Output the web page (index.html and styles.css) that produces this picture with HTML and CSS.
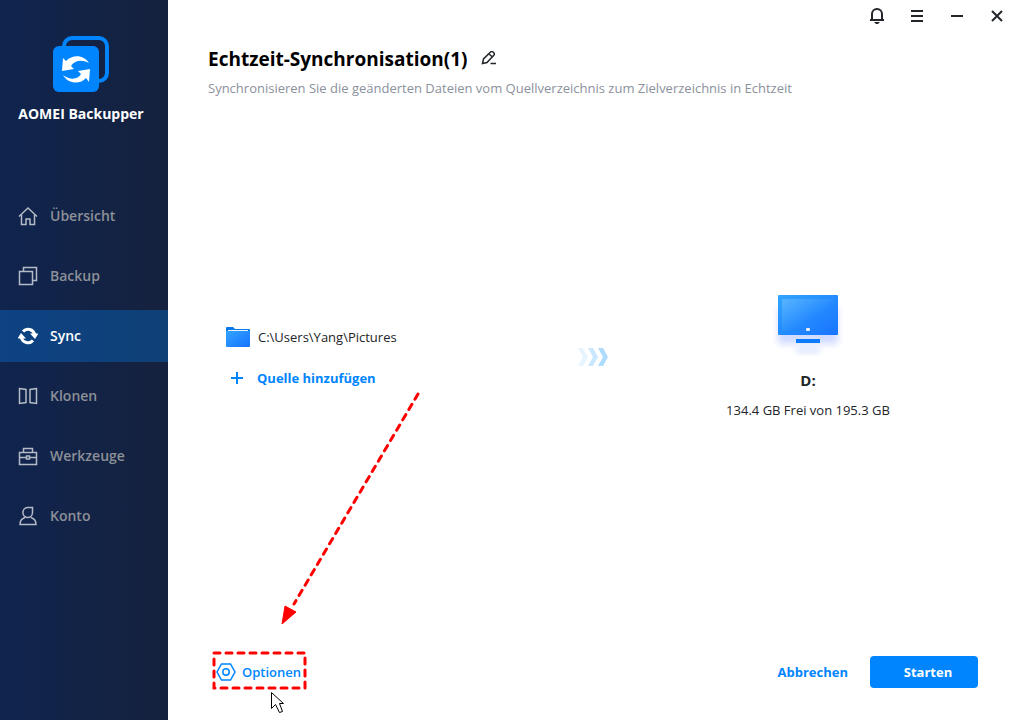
FILE: index.html
```html
<!DOCTYPE html>
<html lang="de">
<head>
  <meta charset="UTF-8">
  <title>AOMEI Backupper</title>
  <meta name="viewport" content="width=device-width, initial-scale=1">
  <link rel="stylesheet" href="styles.css">
</head>
<body>
  <div class="app">
    <aside class="sidebar">
      <div class="brand">
        <svg class="brand-logo" width="56" height="56" viewBox="0 0 56 56" aria-hidden="true">
          <rect x="11" y="2" width="43" height="43" rx="8" fill="none" stroke="#0085ff" stroke-width="4"/>
          <rect x="0" y="10" width="46" height="46" rx="6" fill="#0085ff"/>
          <path d="M10 22 9 35 21 33 18 30C21 25 28 23 36 27 31 19 20 18 13 25Z" fill="#fff"/>
          <path d="M36 46 37 33 25 35 28 38C25 43 18 45 10 39 15 48 27 49 33 42Z" fill="#fff"/>
        </svg>
        <span class="brand-name">AOMEI Backupper</span>
      </div>
      <nav class="menu">
        <a class="menu-item" href="#home">
          <svg width="20" height="20" viewBox="0 0 20 20"><path d="M1 10.500 10 2l9 8.500M3.500 9v9.500h4.500v-5.500h4v5.500h4.500V9"/></svg>
          Übersicht
        </a>
        <a class="menu-item" href="#backup">
          <svg width="20" height="20" viewBox="0 0 20 20"><path d="M1.500 5.500h13v13h-13zM5.500 5V1.500h13v13H15"/></svg>
          Backup
        </a>
        <a class="menu-item active" href="#sync" aria-current="page">
          <svg width="20" height="20" viewBox="0 0 20 20"><path class="bold" d="M5 5.500a6.800 6.800 0 0 1 11.700 3M15 14.500a6.800 6.800 0 0 1-11.700-3"/><path class="solid" d="M-.5 12.500 3 7l5 5.500zM20.500 7.500l-3.500 5.500L12 7.500z"/></svg>
          Sync
        </a>
        <a class="menu-item" href="#clone">
          <svg width="20" height="20" viewBox="0 0 20 20"><path d="M1.500 2.500 8 3.500v13l-6.500 1zM18.500 2.500 12 3.500v13l6.500 1z"/></svg>
          Klonen
        </a>
        <a class="menu-item" href="#tools">
          <svg width="20" height="20" viewBox="0 0 20 20"><path d="M1.500 6.500h17v12h-17zM5.500 6V2.500h9V6M1.500 11.500h7M11.500 11.500h7M8.500 10h3v3h-3z"/></svg>
          Werkzeuge
        </a>
        <a class="menu-item" href="#account">
          <svg width="20" height="20" viewBox="0 0 20 20"><path d="M14.500 1.500H10A4.800 5 0 1 0 14.500 7zM7 11.500c-3 1-5 3.500-5 7h16c0-3.500-2-6-5-7"/></svg>
          Konto
        </a>
      </nav>
    </aside>

    <main class="main">
      <div class="window-bar">
        <button class="window-btn" type="button" aria-label="Benachrichtigungen">
          <svg width="16" height="16" viewBox="0 0 16 16"><path d="M3 11.500V6a5 5 0 0 1 10 0v5.500M1 12h14"/><path class="clapper" d="M5 14h6l-2 2H7z"/></svg>
        </button>
        <button class="window-btn" type="button" aria-label="Menü">
          <svg width="16" height="16" viewBox="0 0 16 16"><path d="M2 3h12M2 8h12M2 13h12"/></svg>
        </button>
        <button class="window-btn" type="button" aria-label="Minimieren">
          <svg width="16" height="16" viewBox="0 0 16 16"><path d="M2 8h12"/></svg>
        </button>
        <button class="window-btn" type="button" aria-label="Schließen">
          <svg width="16" height="16" viewBox="0 0 16 16"><path d="M3 3l10 10M13 3 3 13"/></svg>
        </button>
      </div>

      <header class="task-header">
        <div class="task-title">
          <h1>Echtzeit-Synchronisation(1)</h1>
          <button class="edit-btn" type="button" aria-label="Name bearbeiten">
            <svg width="16" height="16" viewBox="0 0 16 16"><path d="M1.500 12.500 2.500 8 9.500 1q1.200-1 2.500 0l.8.800q1 1.200 0 2.500L6 11.500zM8 3l3.500 3M9.500 12.500H15"/></svg>
          </button>
        </div>
        <p>Synchronisieren Sie die geänderten Dateien vom Quellverzeichnis zum Zielverzeichnis in Echtzeit</p>
      </header>

      <section class="flow">
        <div class="source">
          <div class="source-row">
            <svg width="24" height="20" viewBox="0 0 24 20" aria-hidden="true">
              <defs>
                <linearGradient id="folder" x1="0" y1="0" x2="1" y2="1">
                  <stop offset="0" stop-color="#34a5ff"/>
                  <stop offset="1" stop-color="#1672ff"/>
                </linearGradient>
              </defs>
              <path d="M1 0h6l2 2h14q1 0 1 1v10H0V1q0-1 1-1z" fill="#0878e6"/>
              <path d="M2 3h20v3H2z" fill="#e8f4ff"/>
              <path d="M0 4h24v15q0 1-1 1H1q-1 0-1-1z" fill="url(#folder)"/>
            </svg>
            <span>C:\Users\Yang\Pictures</span>
          </div>
          <button class="add-btn" type="button">
            <svg width="12" height="12" viewBox="0 0 12 12" aria-hidden="true"><path d="M6 0v12M0 6h12" stroke="#0085ff" stroke-width="2"/></svg>
            Quelle hinzufügen
          </button>
        </div>

        <svg class="flow-arrow" width="30" height="18" viewBox="0 0 30 18" aria-hidden="true">
          <path d="M0 0h5l5 9-5 9H0l5-9z" fill="#e5f4ff"/>
          <path d="M10 0h5l5 9-5 9h-5l5-9z" fill="#c9e8ff"/>
          <path d="M20 0h5l5 9-5 9h-5l5-9z" fill="#addcff"/>
        </svg>

        <div class="target">
          <svg width="80" height="66" viewBox="0 0 80 66" aria-hidden="true">
            <defs>
              <linearGradient id="screen" x1="0" y1="0" x2="1" y2="1">
                <stop offset="0" stop-color="#30a5ff"/>
                <stop offset="1" stop-color="#1873ff"/>
              </linearGradient>
              <linearGradient id="glare" x1="0" y1="0" x2="1" y2="1">
                <stop offset="0" stop-color="#fff" stop-opacity=".2"/>
                <stop offset=".6" stop-color="#fff" stop-opacity="0"/>
              </linearGradient>
              <filter id="soft" x="-30%" y="-30%" width="160%" height="180%">
                <feGaussianBlur stdDeviation="3"/>
              </filter>
            </defs>
            <rect x="10" y="14" width="60" height="36" fill="#d0dcff" filter="url(#soft)"/>
            <rect x="28" y="53" width="24" height="6" fill="#dce5ff" filter="url(#soft)"/>
            <rect x="10" y="1" width="60" height="40" rx="1" fill="url(#screen)"/>
            <rect x="14" y="5" width="52" height="32" fill="url(#glare)"/>
            <rect x="38" y="34" width="4" height="3" rx="1" fill="#e8f2ff"/>
            <rect x="28" y="45" width="24" height="4" fill="#0b7cff"/>
          </svg>
          <h2>D:</h2>
          <p>134.4 GB Frei von 195.3 GB</p>
        </div>
      </section>

      <footer class="actions">
        <div class="options">
          <button class="options-btn" type="button">
            <svg width="20" height="18" viewBox="0 0 20 18" aria-hidden="true"><path d="M5.500 1h9L19 9l-4.500 8h-9L1 9z"/><circle cx="10" cy="9" r="3.200"/></svg>
            Optionen
          </button>
          <svg class="pointer-hint" width="216" height="328" viewBox="0 0 216 328" aria-hidden="true">
            <path d="M210 2 86 212" fill="none" stroke="#f00" stroke-width="3" stroke-linecap="round" stroke-dasharray="6 6"/>
            <path d="M74 232 77 214 88 220z" fill="#f00" stroke="#f00"/>
            <rect x="6" y="261" width="91" height="35" fill="none" stroke="#f00" stroke-width="3" stroke-linecap="round" stroke-dasharray="6 6"/>
            <path d="M63.500 300.500v16l4-4 4 8 3-1-3-8h4z" fill="#fff" stroke="#000"/>
          </svg>
        </div>
        <button class="cancel-btn" type="button">Abbrechen</button>
        <button class="start-btn" type="button">Starten</button>
      </footer>
    </main>
  </div>
</body>
</html>
```
FILE: styles.css
```css
* { box-sizing: border-box; }
body {
  margin: 0;
  font-family: "Open Sans", "Noto Sans", sans-serif;
  font-size: 13px;
  line-height: 20px;
  color: #222529;
  background: #fff;
}
h1, h2, p { margin: 0; }
button {
  padding: 0;
  border: none;
  background: none;
  font: inherit;
  color: inherit;
  cursor: pointer;
}
svg { display: block; flex: none; }

.app {
  display: grid;
  grid-template-columns: 168px 1fr;
  min-height: 100vh;
}

/* Sidebar */
.sidebar {
  background: linear-gradient(90deg, #10244e, #15223e);
}
.brand {
  display: flex;
  flex-direction: column;
  align-items: center;
  gap: 12px;
  padding: 36px 6px 0 0;
  color: #fff;
  font-size: 14px;
  font-weight: 700;
}
.menu {
  display: flex;
  flex-direction: column;
  gap: 8px;
  margin-top: 66px;
}
.menu-item {
  display: flex;
  align-items: center;
  gap: 12px;
  height: 52px;
  padding-left: 18px;
  color: #8c9097;
  font-size: 14px;
  font-weight: 600;
  text-decoration: none;
}
.menu-item svg {
  fill: none;
  stroke: #b4bac6;
  stroke-width: 1.5;
}
.menu-item.active {
  color: #fff;
  background: linear-gradient(90deg, #0d4283, #0f4076);
}
.menu-item.active svg { stroke: #fff; }
.menu-item .bold { stroke-width: 3; }
.menu-item .solid { fill: #fff; stroke: none; }

/* Main area */
.main {
  display: flex;
  flex-direction: column;
}
.window-bar {
  display: flex;
  justify-content: flex-end;
  gap: 10px;
}
.window-btn {
  display: flex;
  align-items: center;
  justify-content: center;
  width: 30px;
  height: 32px;
}
.window-btn svg, .edit-btn svg {
  fill: none;
  stroke: #222529;
  stroke-width: 2;
}
.window-btn .clapper { fill: #222529; stroke: none; }
.task-header { padding: 14px 40px 0; }
.task-title {
  display: flex;
  align-items: center;
  gap: 14px;
}
.task-title h1 {
  font-size: 19px;
  line-height: 26px;
  font-weight: 700;
  color: #000;
}
.edit-btn svg { stroke-width: 1.5; }
.task-header p {
  margin-top: 6px;
  color: #8b919c;
}

.flow {
  flex: 1;
  display: grid;
  grid-template-columns: 1fr 36px 1fr;
  align-items: center;
  padding-bottom: 40px;
}
.source {
  display: flex;
  flex-direction: column;
  align-items: flex-start;
  gap: 21px;
  padding-left: 58px;
}
.source-row {
  display: flex;
  align-items: center;
  gap: 8px;
}
.add-btn {
  display: flex;
  align-items: center;
  gap: 14px;
  padding-left: 5px;
  color: #0085ff;
  font-weight: 700;
}
.flow-arrow { justify-self: end; }
.target {
  display: flex;
  flex-direction: column;
  align-items: center;
  padding-right: 4px;
}
.target h2 {
  margin: 10px 0;
  font-size: 15px;
  line-height: 20px;
}

.actions {
  display: flex;
  align-items: center;
  padding: 0 34px 32px 40px;
}
.options {
  position: relative;
  margin-right: auto;
  padding-left: 8px;
}
.options-btn {
  display: flex;
  align-items: center;
  gap: 6px;
  height: 32px;
  color: #0085ff;
  font-weight: 600;
}
.options-btn svg {
  fill: none;
  stroke: #0085ff;
  stroke-width: 1.5;
}
.pointer-hint {
  position: absolute;
  left: 0;
  bottom: -32px;
  pointer-events: none;
}
.cancel-btn {
  margin-right: 22px;
  color: #0085ff;
  font-weight: 700;
}
.start-btn {
  width: 108px;
  height: 32px;
  padding-left: 8px;
  border-radius: 4px;
  color: #fff;
  background: #0085ff;
  font-weight: 700;
}
```
